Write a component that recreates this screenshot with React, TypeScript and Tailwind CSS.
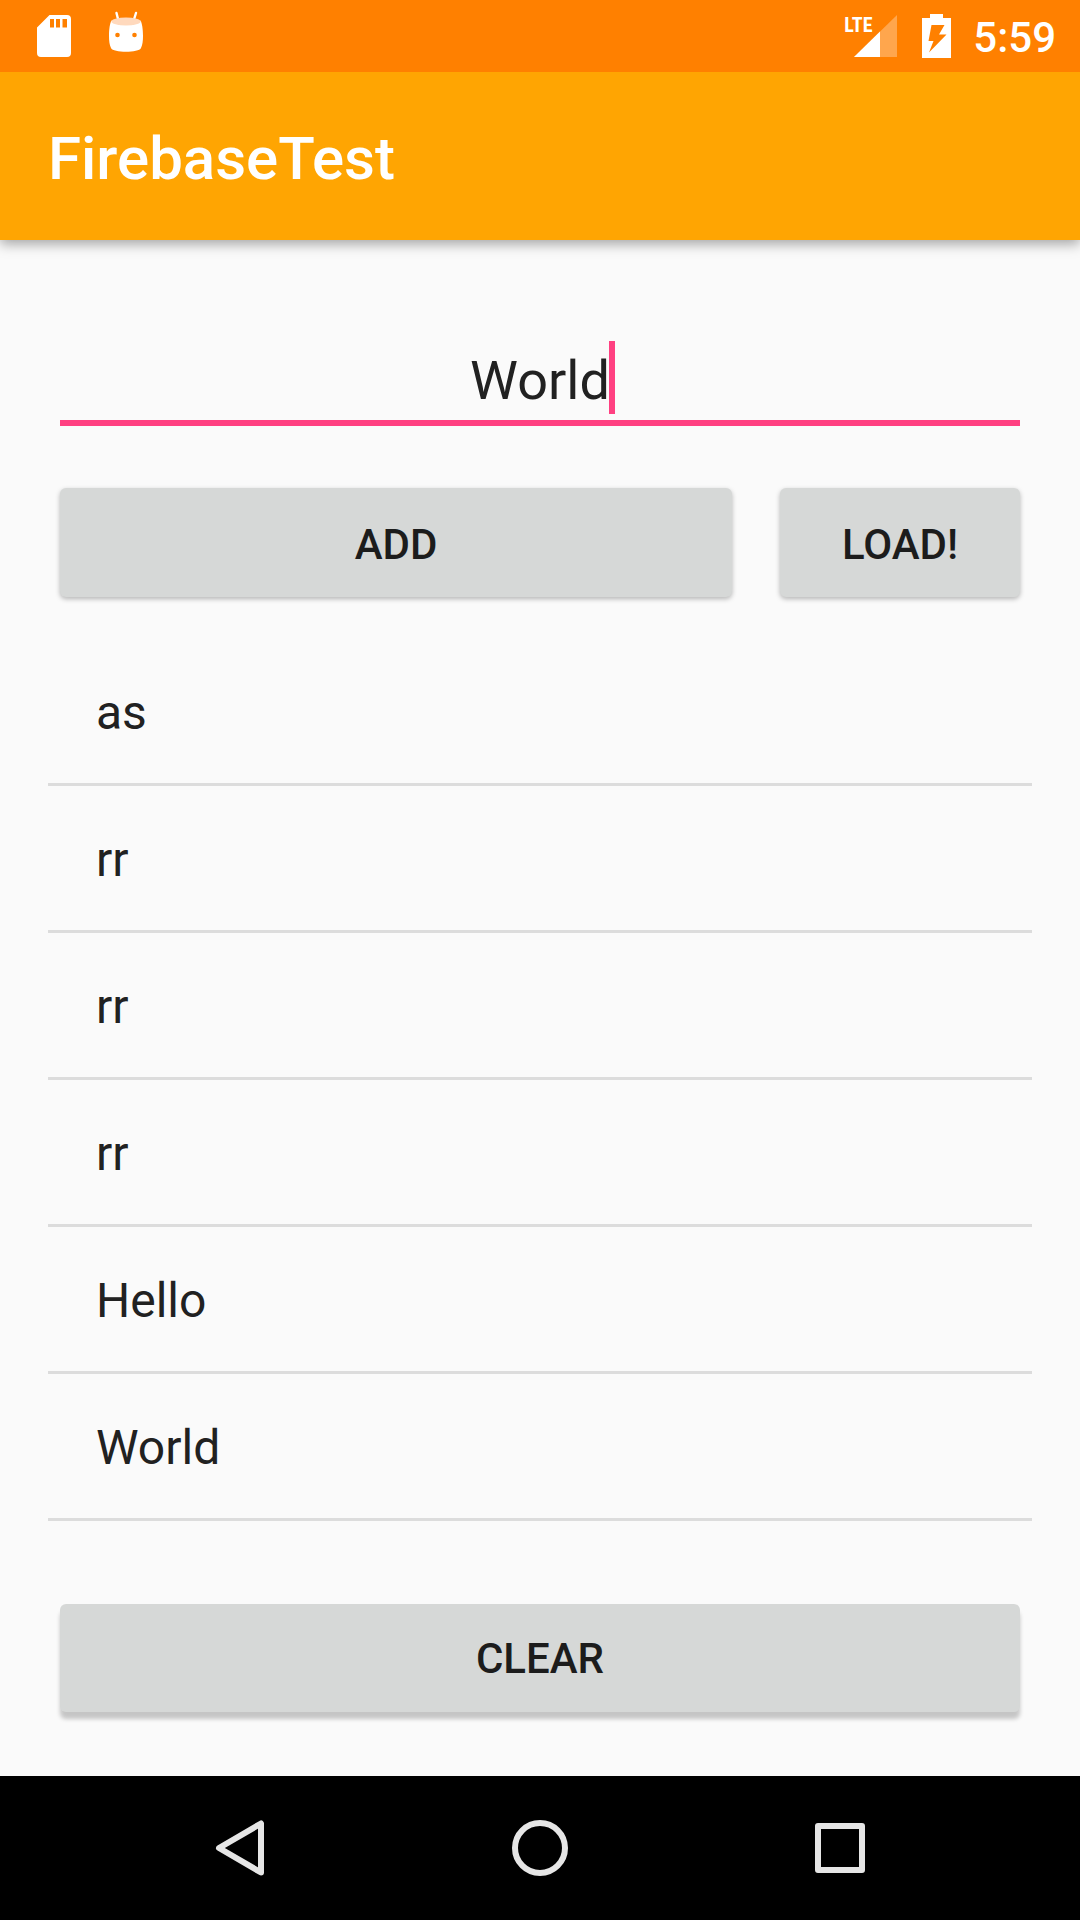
import { useState } from "react";

const INITIAL_ITEMS = ["as", "rr", "rr", "rr", "Hello", "World"];

const RAISED =
  "rounded-md bg-[#d6d8d7] text-[42px] leading-[50px] font-medium text-[#1c1c1c] uppercase";
const LOW_SHADOW = "h-[109px] pt-1 shadow-[0_2px_5px_rgba(0,0,0,0.28)]";
const HIGH_SHADOW = "h-[108px] pt-0.5 shadow-[0_7px_4px_rgba(0,0,0,0.21)]";

function SdCardIcon() {
  return (
    <svg className="h-[42px] w-[34px]" viewBox="0 0 34 42" aria-hidden="true">
      <path
        fillRule="evenodd"
        fill="#fff"
        d="M12.500 0H30a4 4 0 0 1 4 4V38a4 4 0 0 1-4 4H4a4 4 0 0 1-4-4V12.500ZM13 4V12.500H17V4ZM19 4V12.500H23V4ZM25.500 4V12.500H30V4Z"
      />
    </svg>
  );
}

function AndroidIcon() {
  return (
    <svg className="h-[42px] w-[34px]" viewBox="0 0 34 42" aria-hidden="true">
      <path d="M7.500 2L9.500 10M27 2L24.500 10" stroke="#fff" strokeWidth="2.400" strokeLinecap="round" />
      <path
        fill="#fff"
        d="M2.500 9.500C10 15.500 24 15.500 31.500 9.500C33 12 34 18 34 25C34 30 33.500 34 32 37C30 42 4 42 2 37C.5 34 0 30 0 25C0 18 1 12 2.500 9.500Z"
      />
      <ellipse cx="17" cy="10.500" rx="14.700" ry="4" fill="#ffd9bd" />
      <circle cx="8.500" cy="24" r="2.300" fill="#ff8000" />
      <circle cx="25.500" cy="24" r="2.300" fill="#ff8000" />
    </svg>
  );
}

function SignalIcon() {
  return (
    <div className="relative h-[42px] w-[53px]" role="img" aria-label="LTE signal">
      <svg className="absolute right-0 bottom-0 h-[42px] w-[43px]" viewBox="0 0 43 42" aria-hidden="true">
        <path fill="#ffa64d" d="M43 0V42H0Z" />
        <path fill="#fff" d="M26 16.600V42H0Z" />
      </svg>
      <span className="absolute top-0 left-0 font-['Roboto_Condensed','Liberation_Sans_Narrow',Roboto,sans-serif] text-[20px] leading-[20px] font-bold">
        LTE
      </span>
    </div>
  );
}

function BatteryIcon() {
  return (
    <svg className="h-[44px] w-[29px]" viewBox="0 0 29 44" aria-hidden="true">
      <path fill="#fff" d="M8 0H21V4H29V44H0V4H8Z" />
      <path fill="#ff8000" d="M9.500 11H22.500L17 20.500H24.500L7 38.500L11.500 27H6.500Z" />
    </svg>
  );
}

export default function App() {
  const [text, setText] = useState("World");
  const [items, setItems] = useState(INITIAL_ITEMS);

  return (
    <div className="flex min-h-screen flex-col bg-[#fafafa] font-[Roboto,sans-serif] text-[#212121]">
      <div className="relative z-10 flex h-[72px] items-center justify-between bg-[#ff8000] pr-6 pl-[37px] text-white">
        <div className="flex gap-[38px]">
          <SdCardIcon />
          <div className="-mt-1">
            <AndroidIcon />
          </div>
        </div>
        <div className="flex items-center">
          <SignalIcon />
          <div className="mr-[22px] ml-[25px]">
            <BatteryIcon />
          </div>
          <span className="pt-1 text-[42px] leading-[50px] font-medium">5:59</span>
        </div>
      </div>

      <header className="flex h-[168px] items-center bg-[#ffa502] px-12 pt-1.5 text-white shadow-[0_4px_12px_rgba(0,0,0,0.35)]">
        <h1 className="text-[60px] leading-[70px] font-medium">FirebaseTest</h1>
      </header>

      <main className="flex flex-1 flex-col px-12 pt-[101px] pb-16">
        <div className="relative mx-3">
          <input
            type="text"
            aria-label="New item"
            value={text}
            onChange={(e) => setText(e.target.value)}
            className="block h-[85px] w-full border-b-[6px] border-[#ff4081] bg-transparent text-center text-[54px] leading-[79px] caret-[#ff4081] outline-none"
          />
          <span className="absolute top-0 left-1/2 ml-[69px] h-[73px] w-1.5 bg-[#ff4081]" />
        </div>

        <div className="mx-3 mt-[62px] flex gap-12">
          <button type="button" onClick={() => setItems([...items, text])} className={`flex-1 ${RAISED} ${LOW_SHADOW}`}>
            Add
          </button>
          <button type="button" onClick={() => setItems(INITIAL_ITEMS)} className={`w-1/4 ${RAISED} ${LOW_SHADOW}`}>
            Load!
          </button>
        </div>

        <ul className="mt-[42px] mb-[83px]">
          {items.map((item, i) => (
            <li
              key={i}
              className="flex h-[147px] items-center border-b-[3px] border-[#dcdcdc] px-12 pt-1 text-[48px] leading-[56px]"
            >
              {item}
            </li>
          ))}
        </ul>

        <button type="button" onClick={() => setItems([])} className={`mx-3 mt-auto ${RAISED} ${HIGH_SHADOW}`}>
          Clear
        </button>
      </main>

      <nav className="grid h-36 grid-cols-3 bg-black px-[90px]">
        <button type="button" aria-label="Back" className="flex items-center justify-center">
          <svg className="size-[60px]" viewBox="0 0 60 60" fill="none" stroke="#e6e6e6" strokeWidth="6" strokeLinejoin="round">
            <path d="M51 5.500V54.500L9 30Z" />
          </svg>
        </button>
        <button type="button" aria-label="Home" className="flex items-center justify-center">
          <svg className="size-[60px]" viewBox="0 0 60 60" fill="none" stroke="#e6e6e6" strokeWidth="6">
            <circle cx="30" cy="30" r="25" />
          </svg>
        </button>
        <button type="button" aria-label="Recent apps" className="flex items-center justify-center">
          <svg className="size-[60px]" viewBox="0 0 60 60" fill="none" stroke="#e6e6e6" strokeWidth="6" strokeLinejoin="round">
            <rect x="8" y="8" width="44" height="44" />
          </svg>
        </button>
      </nav>
    </div>
  );
}
